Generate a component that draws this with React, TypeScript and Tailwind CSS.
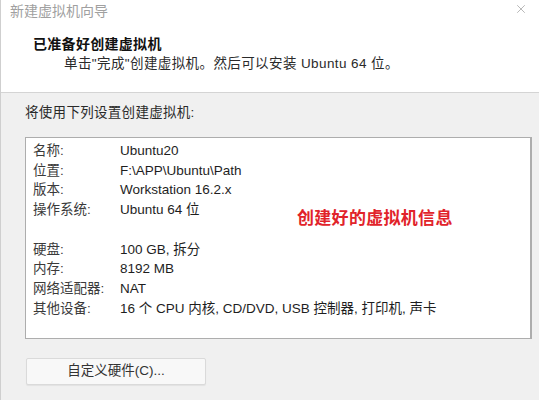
import { X } from "lucide-react";

const rows = [
  { label: "名称:", value: "Ubuntu20" },
  { label: "位置:", value: "F:\\APP\\Ubuntu\\Path" },
  { label: "版本:", value: "Workstation 16.2.x" },
  { label: "操作系统:", value: "Ubuntu 64 位" },
  { label: "", value: "" },
  { label: "硬盘:", value: "100 GB, 拆分" },
  { label: "内存:", value: "8192 MB" },
  { label: "网络适配器:", value: "NAT" },
  { label: "其他设备:", value: "16 个 CPU 内核, CD/DVD, USB 控制器, 打印机, 声卡" },
];

export default function App() {
  return (
    <div className="w-[539px] h-[400px] bg-[#f0f0f0] border-l border-[#cfcfcf] overflow-hidden text-[13.5px] text-[#1e1e1e] font-['Liberation_Sans','Noto_Sans_CJK_SC',sans-serif]">
      <div className="h-[93px] bg-white border-b border-[#d4d4d4]">
        <div className="flex items-start justify-between h-[22px]">
          <span className="pl-[9px] pt-px text-[14px] text-[#a0a0a0]">新建虚拟机向导</span>
          <X className="w-[14px] h-[14px] mt-[2px] mr-[11px] text-[#9a9a9a]" strokeWidth={1.2} />
        </div>
        <div className="pl-[32px] pt-[12px] text-[14px] font-bold text-[#111] leading-[20px] tracking-[0.3px]">已准备好创建虚拟机</div>
        <div className="pl-[63px] leading-[20px] text-[#2a2a2a] tracking-[0.4px]">单击"完成"创建虚拟机。然后可以安装 Ubuntu 64 位。</div>
      </div>

      <div className="pl-[24px] pr-[7px]">
        <div className="pt-[10px] leading-[20px] text-[#2a2a2a] tracking-[0.3px]">将使用下列设置创建虚拟机:</div>
        <div className="relative mt-[14px] h-[202px] bg-white border border-[#adadad] border-r-2 pt-[3px] pl-[7px]">
          {rows.map((row, i) => (
            <div key={i} className="flex h-[19.75px] items-center">
              <span className="w-[87px] text-[#3a3a3a]">{row.label}</span>
              <span>{row.value}</span>
            </div>
          ))}
          <span className="absolute left-[271px] top-[68px] text-[17px] font-bold text-[#e1232a] tracking-[0.3px]">创建好的虚拟机信息</span>
        </div>
        <button className="mt-[19px] ml-px w-[180px] h-[27px] bg-[#f8f8f8] border border-[#dadada] rounded-[2px] text-[#333] shadow-[0_1px_1px_rgba(0,0,0,0.06)]">
          自定义硬件(C)...
        </button>
      </div>
    </div>
  );
}
